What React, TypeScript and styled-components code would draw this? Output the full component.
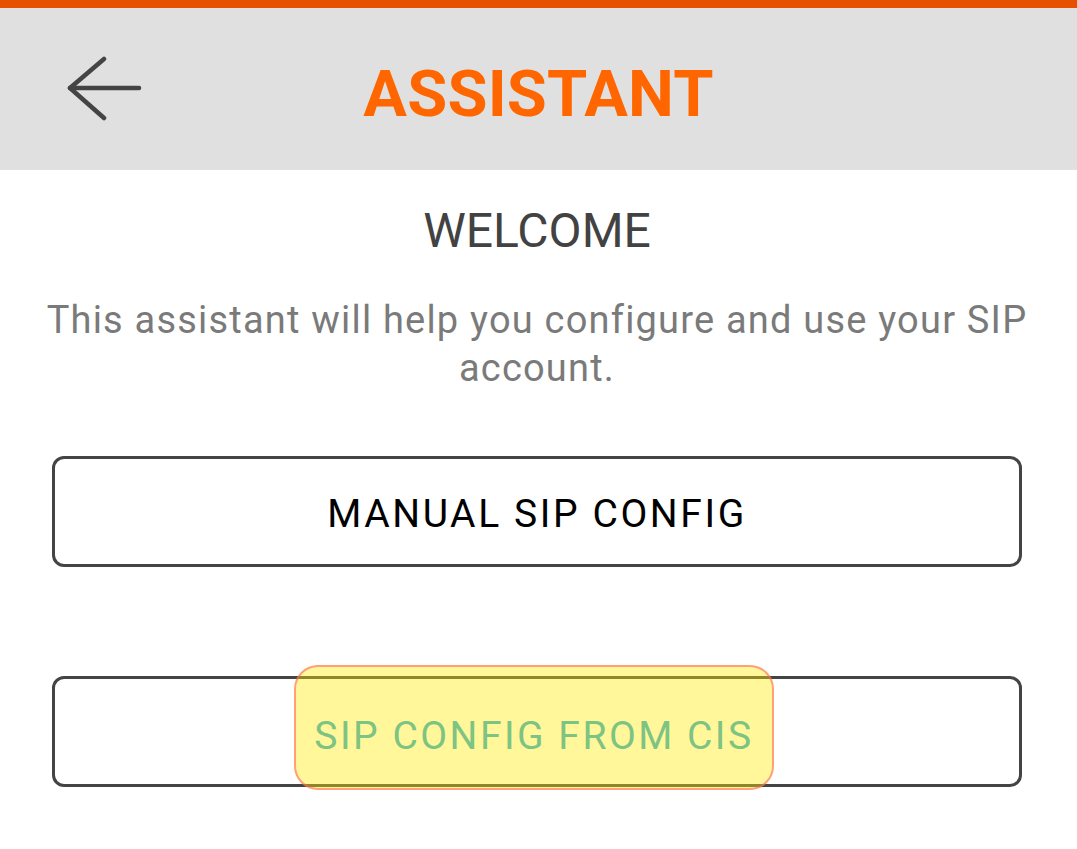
import React from "react";
import styled, { createGlobalStyle } from "styled-components";

const Global = createGlobalStyle`
  html, body { margin: 0; padding: 0; background: #ffffff; }
  body { font-family: Roboto, "Noto Sans", Arial, sans-serif; }
`;

const Page = styled.div`
  width: 1077px;
  min-height: 849px;
  display: flex;
  flex-direction: column;
  border-top: 8px solid #e65100;
  box-sizing: border-box;
`;

const Header = styled.header`
  height: 162px;
  background: #e0e0e0;
  display: grid;
  grid-template-columns: 1fr auto 1fr;
  align-items: center;
`;

const BackButton = styled.button`
  justify-self: start;
  margin-left: 66px;
  width: 78px;
  height: 66px;
  padding: 0;
  border: none;
  background: transparent;
  display: flex;
  align-items: center;
  justify-content: center;
`;

const Title = styled.h1`
  margin: 10px 0 0 0;
  font-family: Roboto, Arial, sans-serif;
  font-weight: 700;
  font-size: 65px;
  letter-spacing: 0.2px;
  color: #ff6600;
`;

const Content = styled.main`
  display: flex;
  flex-direction: column;
  align-items: stretch;
  padding: 0 55px 0 52px;
`;

const Welcome = styled.h2`
  margin: 33px 0 0 0;
  text-align: center;
  font-weight: 400;
  font-size: 48px;
  line-height: 56px;
  color: #424242;
`;

const Description = styled.p`
  margin: 37px -30px 0 -30px;
  text-align: center;
  font-size: 38px;
  letter-spacing: 1.2px;
  line-height: 48px;
  color: #7a7a7a;
`;

const ButtonWrap = styled.div<{ $gap: number }>`
  position: relative;
  margin-top: ${(p) => p.$gap}px;
  display: flex;
  justify-content: center;
`;

const OutlineButton = styled.button`
  width: 100%;
  height: 111px;
  box-sizing: border-box;
  border: 3px solid #444444;
  border-radius: 12px;
  background: #ffffff;
  font-family: Roboto, Arial, sans-serif;
  font-size: 39px;
  letter-spacing: 2.6px;
  font-weight: 400;
  color: #000000;
  display: flex;
  align-items: center;
  justify-content: center;
  padding: 4px 0 0 0;
`;

const Highlight = styled.div`
  position: absolute;
  top: -11px;
  bottom: -3px;
  left: 242px;
  width: 480px;
  box-sizing: border-box;
  border: 2px solid rgba(255, 90, 90, 0.55);
  border-radius: 24px;
  background: rgba(255, 234, 0, 0.4);
  display: flex;
  align-items: center;
  justify-content: center;
  font-size: 39px;
  letter-spacing: 2.5px;
  color: #7dc383;
  padding-top: 16px;
`;

export default function App() {
  return (
    <>
      <Global />
      <Page>
        <Header>
          <BackButton aria-label="Back">
            <svg width="78" height="66" viewBox="0 0 78 66">
              <g
                fill="none"
                stroke="#444444"
                strokeWidth="4.5"
                strokeLinecap="round"
                strokeLinejoin="round"
              >
                <line x1="4" y1="32" x2="73" y2="32" />
                <polyline points="38,3 4,32 38,62" />
              </g>
            </svg>
          </BackButton>
          <Title>ASSISTANT</Title>
          <div />
        </Header>
        <Content>
          <Welcome>WELCOME</Welcome>
          <Description>
            This assistant will help you configure and use your SIP account.
          </Description>
          <ButtonWrap $gap={64}>
            <OutlineButton>MANUAL SIP CONFIG</OutlineButton>
          </ButtonWrap>
          <ButtonWrap $gap={109}>
            <OutlineButton />
            <Highlight>SIP CONFIG FROM CIS</Highlight>
          </ButtonWrap>
        </Content>
      </Page>
    </>
  );
}
